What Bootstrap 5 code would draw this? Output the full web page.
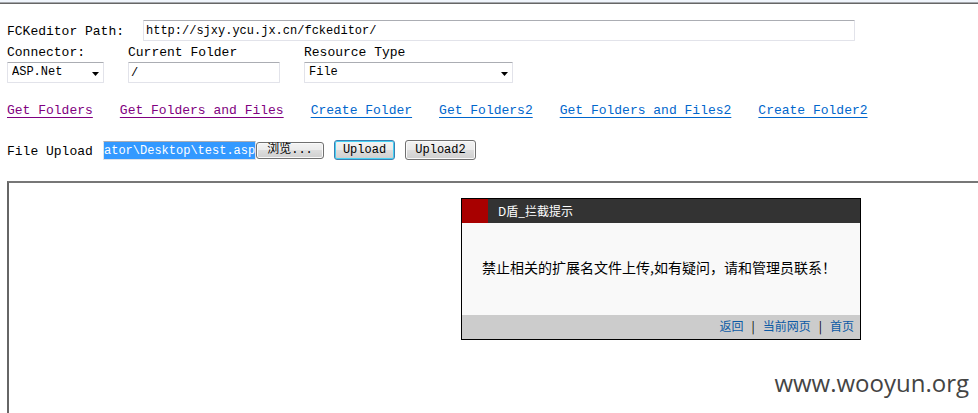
<!DOCTYPE html>
<html lang="en">
<head>
<meta charset="utf-8">
<meta name="viewport" content="width=device-width, initial-scale=1">
<title>FCKeditor - Connectors Tests</title>
<link href="https://cdn.jsdelivr.net/npm/bootstrap@5.3.0/dist/css/bootstrap.min.css" rel="stylesheet">
<style>
  body { font: 13px/20px "Liberation Mono", "Noto Sans CJK SC", monospace; color: #000; background: #fff; }
  .top-rule { height: 4px; background: #f0f5fc; border-bottom: 1px solid #666; box-shadow: inset 0 -1px #a5a8ad; }
  .tester { padding: 16px 0 0 7px; }
  .field { height: 21px; font-size: 12px; line-height: 17px; color: #000; background-color: #fff; border: 1px solid #e2e3ea; border-top-color: #abadb3; border-radius: 1px; padding: 1px 2px; }
  select.field { appearance: none; padding: 1px 16px 1px 4px; background: #fff url("data:image/svg+xml,%3Csvg xmlns='http://www.w3.org/2000/svg' width='7' height='4'%3E%3Cpath d='M0 0h7L3.5 4z'/%3E%3C/svg%3E") no-repeat right 4px top 9px; }
  .path-label { width: 136px; padding-top: 2px; }
  .path-field { width: 712px; }
  .connector-col { width: 97px; }
  .folder-col { width: 152px; }
  .type-col { width: 209px; }
  .option-row { column-gap: 24px; }
  .option-row label { height: 20px; line-height: 22px; }
  .action-row { gap: 27px; margin-top: 18px; }
  .action-row a { color: #06c; text-underline-offset: 3px; }
  .action-row a.seen { color: #800080; }
  .upload-row { margin-top: 19px; height: 21px; }
  .upload-label { width: 96px; padding-top: 2px; }
  .file-field { width: 153px; height: 19px; padding: 0; margin-top: 1px; border: 1px solid #dfe2e8; border-top-color: #abadb3; color: #fff; background: #39f; }
  .push { height: 20px; padding: 0; font-size: 12px; line-height: 16px; color: #000; border: 1px solid #707070; border-radius: 3px; background: linear-gradient(#f3f3f3, #ebebeb 48%, #ddd 50%, #cfcfcf); box-shadow: inset 0 0 0 1px #fafafa; }
  .push-browse { width: 68px; height: 17px; margin: 2px 10px 0 0; line-height: 13px; }
  .push-upload { width: 61px; margin-right: 10px; border-color: #3c7fb1; box-shadow: inset 0 0 0 1px #45d0f4; }
  .push-second { width: 71px; }
  .result { margin: 20px 0 0 7px; padding: 15px 0 74px 452px; border: 2px solid #666; border-width: 2px 0 0 2px; border-top-color: #777; }
  .notice { width: 400px; border: 1px solid #000; font: 12px/24px "Noto Sans CJK SC", sans-serif; background: #f9f9f9; }
  .notice-head { color: #fff; background: #333; }
  .notice-mark { width: 26px; background: #a80000; }
  .notice-title { padding-left: 10px; }
  .notice-text { padding: 32px 20px 36px; font-size: 14px; }
  .notice-foot { gap: 8px; height: 24px; padding: 0 6px; line-height: 22px; background: #ccc; }
  .notice-foot a { color: #0b5aa5; }
  .watermark { right: 9px; bottom: 13px; font: 24px/36px "Open Sans", sans-serif; color: #444; }
</style>
</head>
<body>
<div class="position-relative d-flex flex-column min-vh-100 overflow-hidden">
  <div class="top-rule"></div>
  <form class="tester">
    <div class="d-flex">
      <label class="path-label" for="path">FCKeditor Path:</label>
      <input class="field path-field" id="path" type="text" value="http://sjxy.ycu.jx.cn/fckeditor/">
    </div>
    <div class="d-flex option-row">
      <div class="d-flex flex-column connector-col">
        <label for="connector">Connector:</label>
        <select class="field" id="connector"><option>ASP.Net</option></select>
      </div>
      <div class="d-flex flex-column folder-col">
        <label for="folder">Current Folder</label>
        <input class="field" id="folder" type="text" value="/">
      </div>
      <div class="d-flex flex-column type-col">
        <label for="type">Resource Type</label>
        <select class="field" id="type"><option>File</option></select>
      </div>
    </div>
    <nav class="d-flex flex-wrap action-row">
      <a class="seen" href="#">Get Folders</a>
      <a class="seen" href="#">Get Folders and Files</a>
      <a href="#">Create Folder</a>
      <a href="#">Get Folders2</a>
      <a href="#">Get Folders and Files2</a>
      <a href="#">Create Folder2</a>
    </nav>
    <div class="d-flex align-items-start upload-row">
      <label class="upload-label" for="file">File Upload</label>
      <input class="field file-field" id="file" type="text" value="ator\Desktop\test.asp">
      <button class="push push-browse" type="button">浏览...</button>
      <button class="push push-upload" type="button">Upload</button>
      <button class="push push-second" type="button">Upload2</button>
    </div>
  </form>
  <main class="result flex-grow-1">
    <section class="notice" lang="zh-CN">
      <div class="notice-head d-flex"><span class="notice-mark"></span><span class="notice-title">D盾_拦截提示</span></div>
      <div class="notice-text">禁止相关的扩展名文件上传,如有疑问，请和管理员联系！</div>
      <div class="notice-foot d-flex justify-content-end">
        <a class="text-decoration-none" href="#">返回</a><span>|</span><a class="text-decoration-none" href="#">当前网页</a><span>|</span><a class="text-decoration-none" href="#">首页</a>
      </div>
    </section>
  </main>
  <div class="watermark position-absolute">www.wooyun.org</div>
</div>
<script src="https://cdn.jsdelivr.net/npm/bootstrap@5.3.0/dist/js/bootstrap.bundle.min.js"></script>
</body>
</html>
